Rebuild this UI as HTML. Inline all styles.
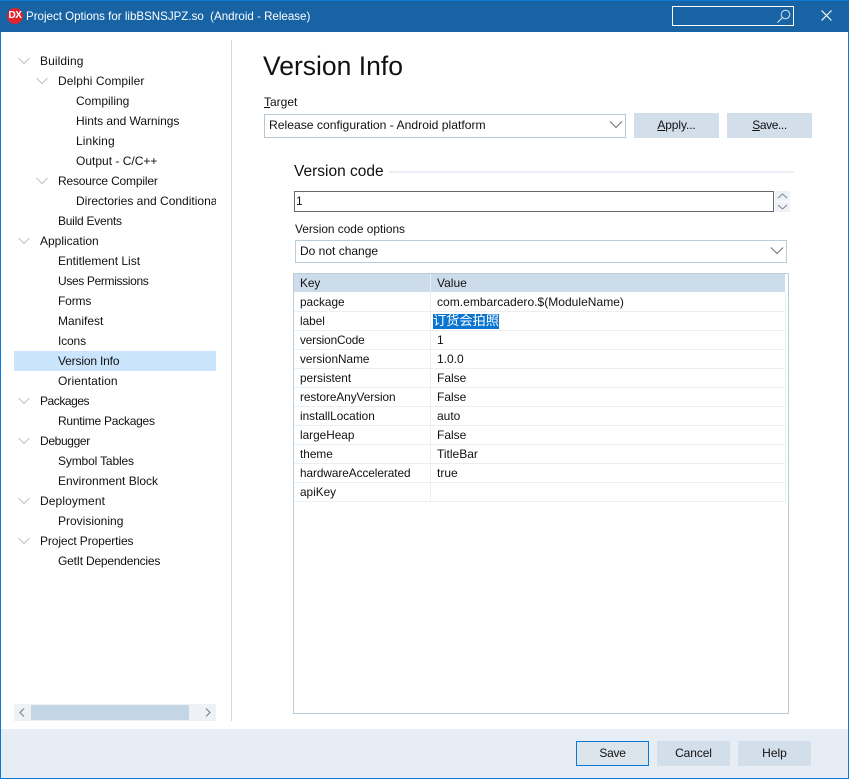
<!DOCTYPE html>
<html><head><meta charset="utf-8">
<style>
html,body{margin:0;padding:0;background:#fff}
#w{position:relative;width:849px;height:779px;overflow:hidden;background:#fff;font-family:"Liberation Sans","Noto Sans CJK SC",sans-serif;font-size:12px;color:#111}
#w div,#w svg{position:absolute}
.t{white-space:nowrap;line-height:16px;height:16px}
.btn{background:#d2deea;text-align:center;line-height:25px;height:25px;color:#111}
.k{left:300px;white-space:nowrap;line-height:16px;font-size:11.8px}
.v{left:437px;white-space:nowrap;line-height:16px}
.rl{left:294px;width:491px;height:1px;background:#e9eff5}
u{text-decoration:underline}
</style></head><body><div id="w">
<div style="left:0;top:0;width:849px;height:32px;background:#1763a4"></div>
<div style="left:0;top:0;width:849px;height:1px;background:#0a78d7"></div>
<div style="left:0;top:32px;width:1px;height:747px;background:#0a78d7"></div>
<div style="left:848px;top:32px;width:1px;height:747px;background:#0a78d7"></div>
<div style="left:0;top:778px;width:849px;height:1px;background:#0a78d7"></div>
<div style="left:7px;top:8px;width:16px;height:16px;border-radius:50%;background:#e0242c;color:#fff;font-size:10px;font-weight:bold;line-height:16px;text-align:center;letter-spacing:-.5px">DX</div>
<div class="t" style="left:26px;top:9px;color:#fff;font-size:11.56px">Project Options for libBSNSJPZ.so&nbsp; (Android - Release)</div>
<div style="left:672px;top:6px;width:120px;height:18px;border:1px solid #fff"></div>
<svg style="left:775px;top:8px" width="18" height="18" viewBox="0 0 18 18"><circle cx="10.5" cy="6.5" r="4.3" fill="none" stroke="#d7e4f0" stroke-width="1"/><path d="M7.4 9.6L2.5 14.5" stroke="#d7e4f0" stroke-width="1.1"/></svg>
<svg style="left:820px;top:9px" width="13" height="13" viewBox="0 0 13 13"><path d="M1.5 1.5L11.5 11.5M11.5 1.5L1.5 11.5" stroke="#fff" stroke-width="1.2"/></svg>

<!-- Tree -->
<div style="left:14px;top:351px;width:202px;height:20px;background:#cae5fb"></div>
<svg style="left:0;top:40px" width="60" height="520" viewBox="0 0 60 520" fill="none" stroke="#bcc2c8" stroke-width="1">
<path d="M18.5 18l5.5 5.5 5.5-5.5M36.5 38l5.5 5.5 5.5-5.5M36.5 138l5.5 5.5 5.5-5.5M18.5 198l5.5 5.5 5.5-5.5M18.5 358l5.5 5.5 5.5-5.5M18.5 398l5.5 5.5 5.5-5.5M18.5 458l5.5 5.5 5.5-5.5M18.5 498l5.5 5.5 5.5-5.5"/>
</svg>
<div style="left:14px;top:41px;width:202px;height:540px;overflow:hidden;background:none" id="tree">
<div class="t" style="left:26px;top:12px;letter-spacing:.1px">Building</div>
<div class="t" style="left:44px;top:32px;letter-spacing:.07px">Delphi Compiler</div>
<div class="t" style="left:62px;top:52px">Compiling</div>
<div class="t" style="left:62px;top:72px;letter-spacing:-.05px">Hints and Warnings</div>
<div class="t" style="left:62px;top:92px;letter-spacing:.1px">Linking</div>
<div class="t" style="left:62px;top:112px">Output - C/C++</div>
<div class="t" style="left:44px;top:132px;letter-spacing:-.18px">Resource Compiler</div>
<div class="t" style="left:62px;top:152px">Directories and Conditionals</div>
<div class="t" style="left:44px;top:172px;letter-spacing:-.25px">Build Events</div>
<div class="t" style="left:26px;top:192px">Application</div>
<div class="t" style="left:44px;top:212px">Entitlement List</div>
<div class="t" style="left:44px;top:232px;letter-spacing:-.35px">Uses Permissions</div>
<div class="t" style="left:44px;top:252px;letter-spacing:-.15px">Forms</div>
<div class="t" style="left:44px;top:272px">Manifest</div>
<div class="t" style="left:44px;top:292px;letter-spacing:-.15px">Icons</div>
<div class="t" style="left:44px;top:312px;letter-spacing:-.17px">Version Info</div>
<div class="t" style="left:44px;top:332px;letter-spacing:.08px">Orientation</div>
<div class="t" style="left:26px;top:352px;letter-spacing:-.45px">Packages</div>
<div class="t" style="left:44px;top:372px;letter-spacing:-.25px">Runtime Packages</div>
<div class="t" style="left:26px;top:392px;letter-spacing:-.35px">Debugger</div>
<div class="t" style="left:44px;top:412px;letter-spacing:-.15px">Symbol Tables</div>
<div class="t" style="left:44px;top:432px">Environment Block</div>
<div class="t" style="left:26px;top:452px;letter-spacing:.1px">Deployment</div>
<div class="t" style="left:44px;top:472px">Provisioning</div>
<div class="t" style="left:26px;top:492px;letter-spacing:-.11px">Project Properties</div>
<div class="t" style="left:44px;top:512px;letter-spacing:-.22px">GetIt Dependencies</div>
</div>
<div style="left:14px;top:704px;width:202px;height:17px;background:#eef2f7"></div>
<div style="left:31px;top:705px;width:158px;height:15px;background:#c4d6e5"></div>
<svg style="left:14px;top:704px" width="202" height="17" viewBox="0 0 202 17" fill="none" stroke="#7e858c" stroke-width="1.2"><path d="M10 4.5L6 8.5L10 12.5M192 4.5L196 8.5L192 12.5"/></svg>
<div style="left:231px;top:40px;width:1px;height:681px;background:#d0dae3"></div>

<!-- Right panel -->
<div class="t" style="left:263px;top:48px;height:36px;line-height:36px;font-size:26.5px;color:#111">Version Info</div>
<div class="t" style="left:264px;top:94px"><u>T</u>arget</div>
<div style="left:264px;top:114px;width:360px;height:22px;border:1px solid #b8c8d3"></div>
<div class="t" style="left:269px;top:117px;font-size:12.15px">Release configuration - Android platform</div>
<svg style="left:608px;top:119px" width="16" height="12" viewBox="0 0 16 12" fill="none" stroke="#6f757a" stroke-width="1.1"><path d="M2 2.5L8 8.5L14 2.5"/></svg>
<div class="btn" style="left:634px;top:113px;width:85px;letter-spacing:-.1px"><u>A</u>pply...</div>
<div class="btn" style="left:727px;top:113px;width:85px;letter-spacing:-.4px"><u>S</u>ave...</div>

<div class="t" style="left:294px;top:162px;height:20px;line-height:20px;font-size:15.5px">Version code</div>
<div style="left:389px;top:171px;width:405px;height:2px;background:#e9eff5"></div>
<div style="left:294px;top:191px;width:478px;height:19px;border:1px solid #666"></div>
<div class="t" style="left:296px;top:193px">1</div>
<div style="left:775px;top:191px;width:15px;height:10px;background:#eef2f7"></div>
<div style="left:775px;top:202px;width:15px;height:10px;background:#eef2f7"></div>
<svg style="left:775px;top:191px" width="15" height="21" viewBox="0 0 15 21" fill="none" stroke="#7e858c" stroke-width="1"><path d="M3 7L7.5 3L12 7M3 14L7.5 18L12 14"/></svg>
<div class="t" style="left:295px;top:221px;font-size:11.85px">Version code options</div>
<div style="left:295px;top:240px;width:490px;height:21px;border:1px solid #b8cdd6"></div>
<div class="t" style="left:300px;top:243px">Do not change</div>
<svg style="left:769px;top:245px" width="16" height="12" viewBox="0 0 16 12" fill="none" stroke="#6f757a" stroke-width="1.1"><path d="M2 2.5L8 8.5L14 2.5"/></svg>

<!-- Table -->
<div style="left:293px;top:273px;width:494px;height:439px;border:1px solid #b8cdd6"></div>
<div style="left:294px;top:274px;width:491px;height:18px;background:#cddceb"></div>
<div style="left:430px;top:274px;width:1px;height:228px;background:#e9eff5"></div>
<div style="left:785px;top:293px;width:1px;height:209px;background:#e9eff5"></div>
<div class="rl" style="top:311px"></div><div class="rl" style="top:330px"></div><div class="rl" style="top:349px"></div><div class="rl" style="top:368px"></div><div class="rl" style="top:387px"></div><div class="rl" style="top:406px"></div><div class="rl" style="top:425px"></div><div class="rl" style="top:444px"></div><div class="rl" style="top:463px"></div><div class="rl" style="top:482px"></div><div class="rl" style="top:501px"></div>
<div class="k" style="top:275px">Key</div><div class="v" style="top:275px">Value</div>
<div class="k" style="top:294px">package</div><div class="v" style="top:294px;letter-spacing:.03px">com.embarcadero.$(ModuleName)</div>
<div class="k" style="top:313px">label</div>
<div style="left:433px;top:314px;width:66px;height:15px;background:#0a74d1"></div>
<div style="left:433px;top:313px;color:#fff;font-size:13.2px;line-height:16px;white-space:nowrap">订货会拍照</div>
<div class="k" style="top:332px;letter-spacing:-.15px">versionCode</div><div class="v" style="top:332px">1</div>
<div class="k" style="top:351px">versionName</div><div class="v" style="top:351px">1.0.0</div>
<div class="k" style="top:370px">persistent</div><div class="v" style="top:370px">False</div>
<div class="k" style="top:389px;letter-spacing:-.05px">restoreAnyVersion</div><div class="v" style="top:389px">False</div>
<div class="k" style="top:408px">installLocation</div><div class="v" style="top:408px">auto</div>
<div class="k" style="top:427px">largeHeap</div><div class="v" style="top:427px">False</div>
<div class="k" style="top:446px">theme</div><div class="v" style="top:446px">TitleBar</div>
<div class="k" style="top:465px;letter-spacing:-.05px">hardwareAccelerated</div><div class="v" style="top:465px">true</div>
<div class="k" style="top:484px">apiKey</div>

<!-- Footer -->
<div style="left:1px;top:729px;width:847px;height:49px;background:#e6edf4"></div>
<div class="btn" style="left:576px;top:741px;width:71px;height:23px;line-height:23px;border:1px solid #0a78d7;background:#dce4ec;letter-spacing:-.3px">Save</div>
<div class="btn" style="left:657px;top:741px;width:73px;letter-spacing:-.1px">Cancel</div>
<div class="btn" style="left:738px;top:741px;width:73px">Help</div>
</div></body></html>
